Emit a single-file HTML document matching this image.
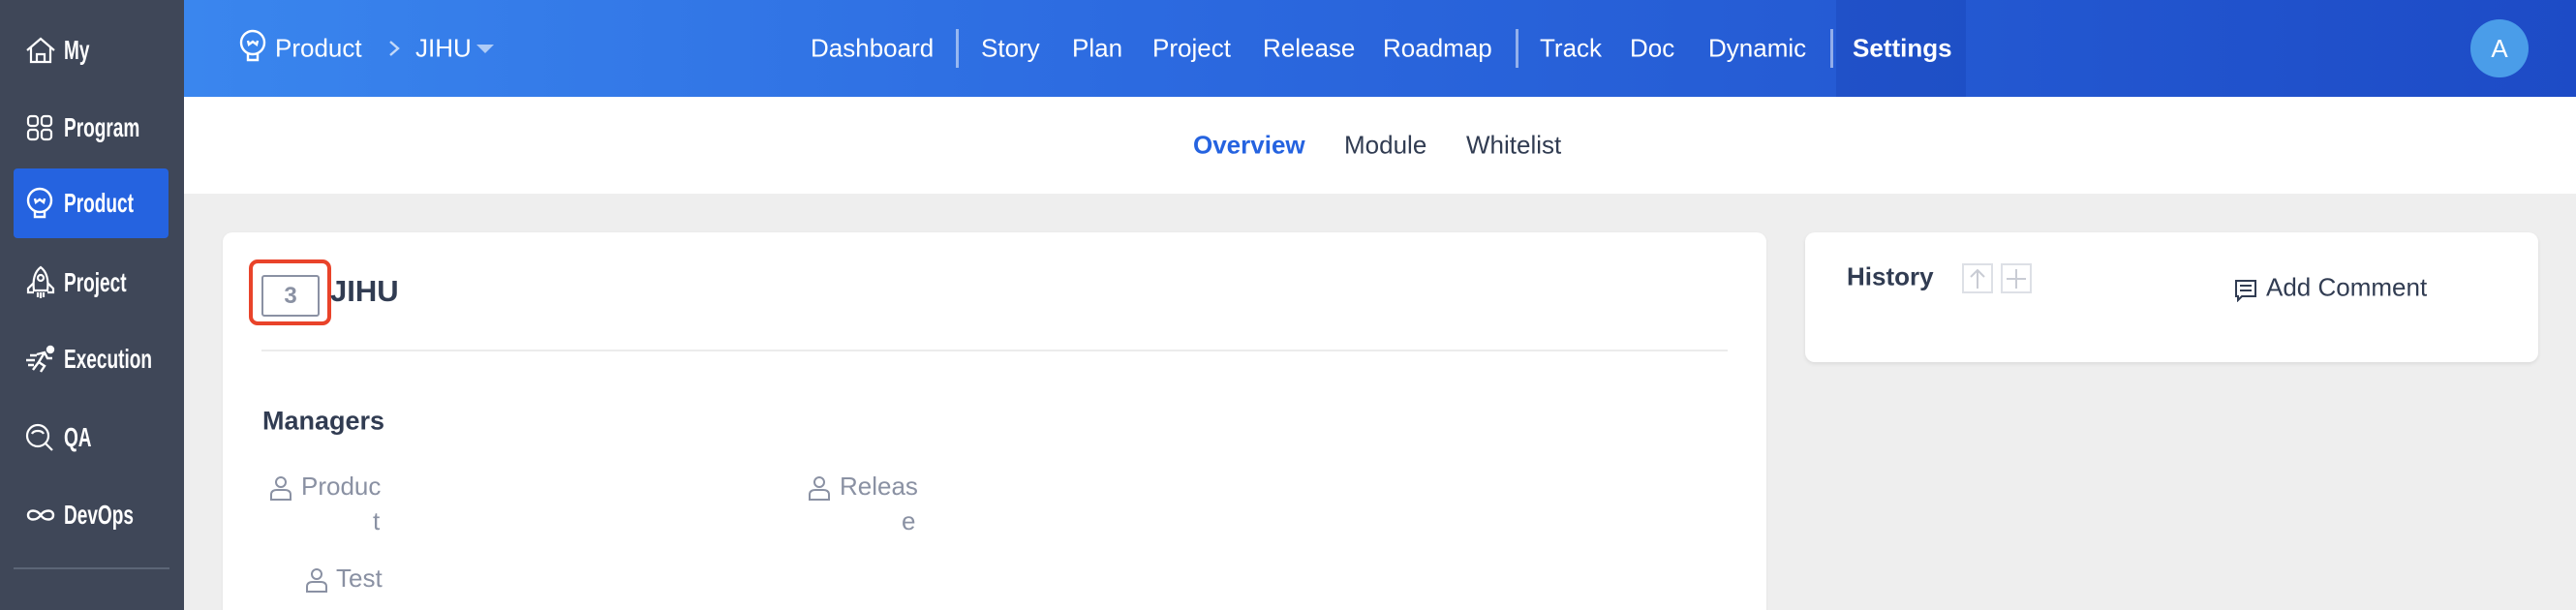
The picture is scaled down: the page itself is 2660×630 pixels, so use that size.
<!DOCTYPE html>
<html><head><meta charset="utf-8"><style>
*{margin:0;padding:0;box-sizing:border-box}
html,body{width:2660px;height:630px;overflow:hidden}
body{background:#eeeeee;font-family:"Liberation Sans",Arial,sans-serif;position:relative}
.side{position:absolute;left:0;top:0;width:190px;height:630px;background:#3f4758}
.item{position:absolute;left:14px;width:160px;height:72px;color:#fff;font-weight:bold;font-size:28px}
.item span{position:absolute;left:52px;top:50%;transform-origin:left center;transform:translateY(-50%) scaleX(0.68);white-space:nowrap}
.item svg{position:absolute;left:12px;top:50%;transform:translateY(-50%)}
.item.act{background:#2563e0;border-radius:4px}
.sdiv{position:absolute;left:14px;width:161px;top:586px;height:2px;background:#5c6576}
.hdr{position:absolute;left:190px;top:0;width:2470px;height:100px;background:linear-gradient(90deg,#3a86ee 0%,#2c6ae0 40%,#1d4bc6 100%)}
.hdr .t{position:absolute;top:50px;transform:translateY(-50%);color:#fff;font-size:26px;white-space:nowrap}
.sep{position:absolute;top:30px;width:3px;height:40px;background:rgba(255,255,255,.5)}
.sub{position:absolute;left:190px;top:100px;width:2470px;height:100px;background:#fff}
.sub .t{position:absolute;top:50px;transform:translateY(-50%);font-size:26px;color:#313c52}
.card{position:absolute;background:#fff;border-radius:10px;box-shadow:0 1px 3px rgba(0,0,0,.06)}
.g{color:#8a91a3;font-size:26px;position:absolute}
</style></head><body>
<div class="side">
 <div class="item" style="top:16px"><svg width="32" height="30" viewBox="0 0 32 30" fill="none" stroke="#fff" stroke-width="2.2"><path d="M2 15 L16 3 L30 15 M6 12 V27 H26 V12 M12 27 V19 H20 V27"/></svg><span>My</span></div>
 <div class="item" style="top:96px"><svg width="30" height="30" viewBox="0 0 30 30" fill="none" stroke="#fff" stroke-width="2.2"><rect x="3" y="3" width="10" height="10" rx="3"/><rect x="17" y="3" width="10" height="10" rx="3"/><rect x="3" y="17" width="10" height="10" rx="3"/><rect x="17" y="17" width="10" height="10" rx="3"/></svg><span>Program</span></div>
 <div class="item act" style="top:174px"><svg width="30" height="34" viewBox="0 0 30 34" fill="none" stroke="#fff" stroke-width="2.4"><circle cx="15" cy="14" r="12"/><path d="M10 24 V31 H20 V24 M10 12 L11 16 L15 13 L19 16 L20 12"/></svg><span>Product</span></div>
 <div class="item" style="top:256px"><svg width="32" height="36" viewBox="0 0 32 36" fill="none" stroke="#fff" stroke-width="2.2"><path d="M16 2 C8 8 8 18 9 26 H23 C24 18 24 8 16 2 Z M9 18 L3 24 V28 H9 M23 18 L29 24 V28 H23 M13 28 V33 M16 28 V34 M19 28 V33"/><circle cx="16" cy="13" r="3"/></svg><span>Project</span></div>
 <div class="item" style="top:335px"><svg width="32" height="30" viewBox="0 0 32 30" fill="none" stroke="#fff" stroke-width="2.4"><circle cx="26" cy="5" r="3" fill="#fff"/><path d="M12 10 L20 8 L23 14 L28 14 M20 8 L14 18 L20 22 L16 28 M14 18 L8 26 M1 16 H10 M3 21 H9 M5 11 H12"/></svg><span>Execution</span></div>
 <div class="item" style="top:416px"><svg width="30" height="30" viewBox="0 0 30 30" fill="none" stroke="#fff" stroke-width="2.2"><circle cx="13" cy="13" r="11"/><path d="M21 21 L28 28 M7 11 C9 7 17 7 19 11"/></svg><span>QA</span></div>
 <div class="item" style="top:496px"><svg width="32" height="20" viewBox="0 0 32 20" fill="none" stroke="#fff" stroke-width="2.4"><path d="M16 10 C12 4 3 4 3 10 C3 16 12 16 16 10 C20 4 29 4 29 10 C29 16 20 16 16 10 Z"/></svg><span>DevOps</span></div>
 <div class="sdiv"></div>
</div>
<div class="hdr">
 <svg style="position:absolute;left:56px;top:30px" width="30" height="36" viewBox="0 0 30 36" fill="none" stroke="#fff" stroke-width="2.4"><circle cx="15" cy="14" r="12"/><path d="M10 24 V32 H20 V24 M10 12 L11 16 L15 13 L19 16 L20 12"/></svg>
 <div class="t" style="left:94px">Product</div>
 <svg style="position:absolute;left:210px;top:40px" width="14" height="20" viewBox="0 0 14 20" fill="none" stroke="rgba(255,255,255,.7)" stroke-width="2.4"><path d="M3 3 L11 10 L3 17"/></svg>
 <div class="t" style="left:239px">JIHU</div>
 <svg style="position:absolute;left:302px;top:46px" width="18" height="10"><path d="M0 0 H18 L9 9 Z" fill="rgba(255,255,255,.6)"/></svg>
 <div class="t" style="left:647px">Dashboard</div>
 <div class="sep" style="left:797px"></div>
 <div class="t" style="left:823px">Story</div>
 <div class="t" style="left:917px">Plan</div>
 <div class="t" style="left:1000px">Project</div>
 <div class="t" style="left:1114px">Release</div>
 <div class="t" style="left:1238px">Roadmap</div>
 <div class="sep" style="left:1375px"></div>
 <div class="t" style="left:1400px">Track</div>
 <div class="t" style="left:1493px">Doc</div>
 <div class="t" style="left:1574px">Dynamic</div>
 <div class="sep" style="left:1700px"></div>
 <div style="position:absolute;left:1706px;top:0;width:134px;height:100px;background:rgba(10,40,150,.18)"></div>
 <div class="t" style="left:1723px;font-weight:bold">Settings</div>
 <div style="position:absolute;left:2361px;top:20px;width:60px;height:60px;border-radius:50%;background:#4a9de9;color:#fff;font-size:26px;text-align:center;line-height:60px">A</div>
</div>
<div class="sub">
 <div class="t" style="left:1042px;color:#2563e0;font-weight:bold">Overview</div>
 <div class="t" style="left:1198px">Module</div>
 <div class="t" style="left:1324px">Whitelist</div>
</div>
<div class="card" style="left:230px;top:240px;width:1594px;height:400px">
 <div style="position:absolute;left:27px;top:28px;width:85px;height:68px;border:4px solid #e9432a;border-radius:9px"></div>
 <div style="position:absolute;left:40px;top:44px;width:60px;height:43px;border:2px solid #8a91a3;border-radius:3px;color:#8a91a3;font-weight:bold;font-size:24px;text-align:center;line-height:39px">3</div>
 <div style="position:absolute;left:111px;top:61px;transform:translateY(-50%);font-weight:bold;font-size:31px;color:#313c52">JIHU</div>
 <div style="position:absolute;left:40px;top:121px;width:1514px;height:2px;background:#ececec"></div>
 <div style="position:absolute;left:41px;top:195px;transform:translateY(-50%);font-weight:bold;font-size:27px;color:#313c52">Managers</div>
 <svg style="position:absolute;left:48px;top:251px" width="24" height="26" viewBox="0 0 24 26" fill="none" stroke="#8a91a3" stroke-width="2"><circle cx="12" cy="7" r="5"/><path d="M2 25 V20 Q2 15 8 15 H16 Q22 15 22 20 V25 Z"/></svg>
 <div class="g" style="left:81px;top:247px">Produc</div>
 <div class="g" style="left:155px;top:283px">t</div>
 <svg style="position:absolute;left:604px;top:251px" width="24" height="26" viewBox="0 0 24 26" fill="none" stroke="#8a91a3" stroke-width="2"><circle cx="12" cy="7" r="5"/><path d="M2 25 V20 Q2 15 8 15 H16 Q22 15 22 20 V25 Z"/></svg>
 <div class="g" style="left:637px;top:247px">Releas</div>
 <div class="g" style="left:701px;top:283px">e</div>
 <svg style="position:absolute;left:85px;top:346px" width="24" height="26" viewBox="0 0 24 26" fill="none" stroke="#8a91a3" stroke-width="2"><circle cx="12" cy="7" r="5"/><path d="M2 25 V20 Q2 15 8 15 H16 Q22 15 22 20 V25 Z"/></svg>
 <div class="g" style="left:117px;top:342px">Test</div>
</div>
<div class="card" style="left:1864px;top:240px;width:757px;height:134px;box-shadow:0 2px 4px rgba(0,0,0,.08)">
 <div style="position:absolute;left:43px;top:46px;transform:translateY(-50%);font-weight:bold;font-size:26px;color:#313c52">History</div>
 <div style="position:absolute;left:162px;top:32px;width:32px;height:31px;border:2px solid #dde0e6"></div>
 <svg style="position:absolute;left:168px;top:36px" width="20" height="24" viewBox="0 0 20 24" fill="none" stroke="#c9ccd4" stroke-width="2"><path d="M10 22 V3 M3 10 L10 3 L17 10"/></svg>
 <div style="position:absolute;left:202px;top:32px;width:32px;height:31px;border:2px solid #dde0e6"></div>
 <svg style="position:absolute;left:207px;top:37px" width="22" height="22" viewBox="0 0 22 22" fill="none" stroke="#c9ccd4" stroke-width="2"><path d="M11 1 V21 M1 11 H21"/></svg>
 <svg style="position:absolute;left:443px;top:48px" width="24" height="24" viewBox="0 0 24 24" fill="none" stroke="#313c52" stroke-width="2"><path d="M2 2 H22 V18 H8 L4 22 V18 H2 Z M6 7 H18 M6 12 H18"/></svg>
 <div style="position:absolute;left:476px;top:57px;transform:translateY(-50%);font-size:26px;color:#313c52">Add Comment</div>
</div>
</body></html>
